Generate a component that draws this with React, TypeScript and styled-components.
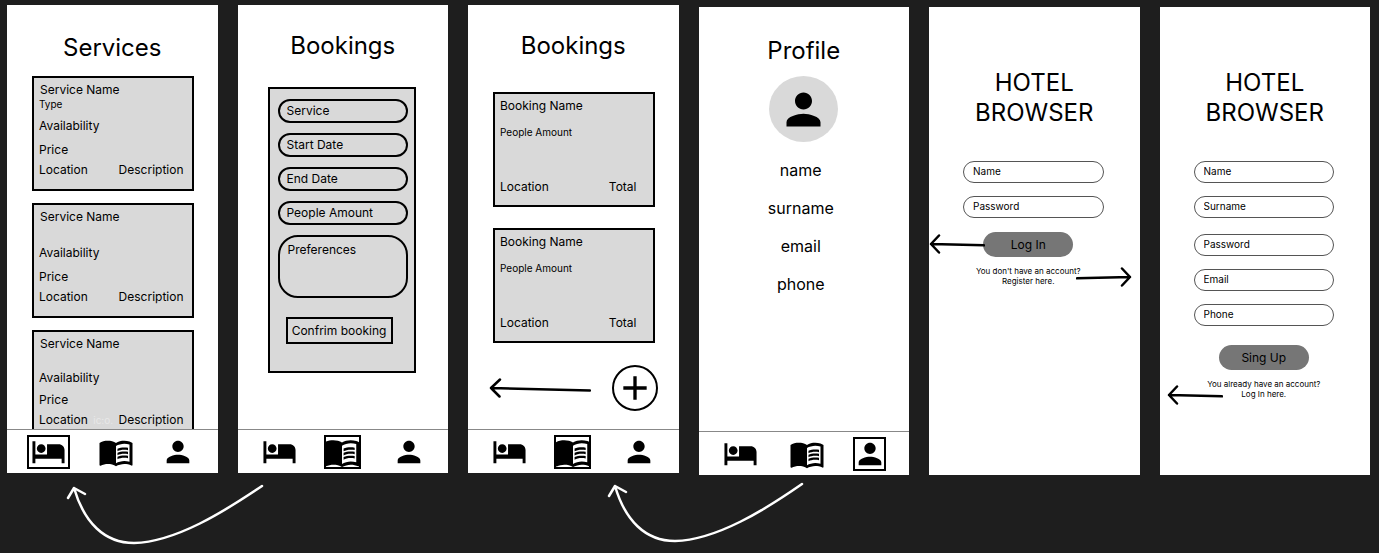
import React from 'react';
import styled, { createGlobalStyle } from 'styled-components';
import { MdHotel, MdMenuBook, MdPerson, MdAdd } from 'react-icons/md';

const GlobalStyle = createGlobalStyle`
  *, *::before, *::after { box-sizing: border-box; }
  body {
    margin: 0;
    background: #1e1e1e;
    color: #000;
    font-family: Inter, "Liberation Sans", sans-serif;
    font-size: 12px;
    line-height: 16px;
  }
  h1, h2, p, ul { margin: 0; padding: 0; font-weight: 400; }
  ul { list-style: none; }
  button, input, textarea { font: inherit; color: inherit; margin: 0; }
  a { color: inherit; text-decoration: none; }
  svg { display: block; }
`;

const Board = styled.main`
  display: grid;
  grid-template-columns: repeat(6, minmax(0, 1fr));
  grid-template-rows: auto 1fr;
  column-gap: 20px;
  align-items: start;
  min-height: 100vh;
  padding: 5px 9px 0 7px;
`;

const Screen = styled.section<{ $lowered?: boolean }>`
  position: relative;
  display: flex;
  flex-direction: column;
  min-height: 468px;
  margin-top: ${(p) => (p.$lowered ? 2 : 0)}px;
  background: #fff;
`;

const Title = styled.h1<{ $top: number }>`
  padding-top: ${(p) => p.$top}px;
  font-size: 24px;
  line-height: 30px;
  text-align: center;
`;

/* Bottom navigation */

const NavBar = styled.nav`
  display: grid;
  grid-template-columns: 43px 45px 33px;
  justify-content: space-between;
  align-items: center;
  height: 44px;
  margin-top: auto;
  padding: 0 23px 0 20px;
  border-top: 1px solid #888;
`;

const NavButton = styled.button<{ $active: boolean; $width: number }>`
  display: flex;
  align-items: center;
  justify-content: center;
  justify-self: ${(p) => (p.$active ? 'start' : 'center')};
  width: ${(p) => p.$width}px;
  height: 34px;
  padding: 0;
  background: none;
  border: ${(p) => (p.$active ? '2px solid #000' : '0')};
  overflow: hidden;
  svg { flex: none; }
`;

type Tab = 'services' | 'bookings' | 'profile';

function BottomNav({ active }: { active: Tab }) {
  return (
    <NavBar aria-label="Sections">
      <NavButton type="button" aria-label="Services" $active={active === 'services'} $width={43}>
        <MdHotel size={35} />
      </NavButton>
      <NavButton type="button" aria-label="Bookings" $active={active === 'bookings'} $width={37}>
        <MdMenuBook size={active === 'bookings' ? 38 : 36} />
      </NavButton>
      <NavButton type="button" aria-label="Profile" $active={active === 'profile'} $width={33}>
        <MdPerson size={34} />
      </NavButton>
    </NavBar>
  );
}

/* Services */

const ServiceList = styled.ul`
  display: flex;
  flex: 1 1 0;
  flex-direction: column;
  gap: 12px;
  min-height: 0;
  padding: 13px 24px 0 25px;
  overflow: hidden;
`;

const Card = styled.li`
  display: flex;
  flex: none;
  flex-direction: column;
  height: 115px;
  padding: 4px 8px 0 5px;
  background: #d9d9d9;
  border: 2px solid #000;
`;

const ServiceName = styled.h2`
  padding-left: 1px;
  font-size: 12px;
  line-height: 16px;
`;

const Kind = styled.p`
  height: 12px;
  font-size: 10px;
  line-height: 12px;
`;

const Facts = styled.div<{ $dense?: boolean }>`
  display: flex;
  flex-direction: column;
  gap: ${(p) => (p.$dense ? 6 : 8)}px;
  padding-top: ${(p) => (p.$dense ? 6 : 8)}px;
`;

const CardFooter = styled.div`
  display: flex;
  justify-content: space-between;
  margin-top: 4px;
`;

const Faint = styled.span`
  color: #e8e8e8;
  font-size: 10px;
`;

function ServiceCard({ kind, dense, note }: { kind?: string; dense?: boolean; note?: string }) {
  return (
    <Card>
      <ServiceName>Service Name</ServiceName>
      <Kind>{kind}</Kind>
      <Facts $dense={dense}>
        <p>Availability</p>
        <p>Price</p>
      </Facts>
      <CardFooter>
        <span>Location</span>
        {note && <Faint>{note}</Faint>}
        <span>Description</span>
      </CardFooter>
    </Card>
  );
}

/* Booking form */

const BookingForm = styled.form`
  display: flex;
  flex-direction: column;
  gap: 10px;
  margin: 26px 32px 0 30px;
  padding: 10px 6px 27px 8px;
  background: #d9d9d9;
  border: 2px solid #000;
`;

const BookingInput = styled.input`
  width: 100%;
  height: 24px;
  padding: 0 7px 2px;
  background: none;
  border: 2px solid #000;
  border-radius: 12px;
  outline: 0;
  &::placeholder { color: #000; opacity: 1; }
`;

const BookingNotes = styled.textarea`
  display: block;
  width: 100%;
  height: 63px;
  padding: 5px 8px;
  background: none;
  border: 2px solid #000;
  border-radius: 20px;
  outline: 0;
  resize: none;
  &::placeholder { color: #000; opacity: 1; }
`;

const ConfirmButton = styled.button`
  align-self: flex-start;
  width: 107px;
  height: 27px;
  margin: 9px 0 0 8px;
  padding: 0;
  background: none;
  border: 2px solid #000;
  white-space: nowrap;
`;

/* Bookings list */

const BookingList = styled.ul`
  display: flex;
  flex-direction: column;
  gap: 21px;
  padding: 31px 24px 0 25px;
`;

const BookingName = styled.h2`
  font-size: 12px;
  line-height: 16px;
`;

const People = styled.p`
  margin-top: 12px;
  font-size: 10px;
  line-height: 12px;
`;

const BookingFooter = styled.div`
  display: flex;
  justify-content: space-between;
  margin: auto 8px 10px 0;
`;

const AddRow = styled.div`
  display: flex;
  align-items: center;
  justify-content: space-between;
  padding: 22px 21px 0 21px;
`;

const AddButton = styled.button`
  display: flex;
  align-items: center;
  justify-content: center;
  width: 46px;
  height: 46px;
  padding: 0;
  background: none;
  border: 2px solid #000;
  border-radius: 50%;
`;

function BookingCard() {
  return (
    <Card>
      <BookingName>Booking Name</BookingName>
      <People>People Amount</People>
      <BookingFooter>
        <span>Location</span>
        <span>Total</span>
      </BookingFooter>
    </Card>
  );
}

/* Profile */

const Avatar = styled.div`
  display: flex;
  align-items: center;
  justify-content: center;
  align-self: center;
  width: 69px;
  height: 66px;
  margin-top: 10px;
  background: #d9d9d9;
  border-radius: 50%;
`;

const ProfileList = styled.ul`
  display: flex;
  flex-direction: column;
  gap: 18px;
  padding: 18px 6px 0 0;
  font-size: 16px;
  line-height: 20px;
  text-align: center;
`;

/* Account forms */

const AccountForm = styled.form`
  display: flex;
  flex-direction: column;
  padding: 33px 36px 0 34px;
`;

const FieldGroup = styled.div`
  display: flex;
  flex-direction: column;
  gap: 13px;
  & + & { margin-top: 16px; }
`;

const AccountInput = styled.input`
  width: 100%;
  height: 22px;
  padding: 0 9px 2px;
  background: none;
  border: 1px solid #555;
  border-radius: 11px;
  outline: 0;
  font-size: 10px;
  &::placeholder { color: #000; opacity: 1; }
`;

const Actions = styled.div<{ $top: number; $right?: number }>`
  display: flex;
  flex-direction: column;
  align-items: center;
  gap: 9px;
  padding: ${(p) => p.$top}px ${(p) => p.$right ?? 0}px 0 0;
`;

const SubmitButton = styled.button`
  width: 90px;
  height: 25px;
  padding: 0;
  background: #767676;
  border: 0;
  border-radius: 13px;
`;

const Hint = styled.p`
  font-size: 8px;
  line-height: 10px;
  text-align: center;
  white-space: nowrap;
`;

/* Prototype flow arrows */

const Pointer = styled.svg<{ $x: number; $y: number }>`
  position: absolute;
  left: ${(p) => p.$x}px;
  top: ${(p) => p.$y}px;
`;

const FlowCurve = styled.svg<{ $column: string }>`
  grid-column: ${(p) => p.$column};
  grid-row: 2;
  width: 100%;
  height: auto;
`;

function Line({ d, color = '#000' }: { d: string; color?: string }) {
  return <path d={d} fill="none" stroke={color} strokeWidth="2.5" strokeLinecap="round" strokeLinejoin="round" />;
}

export default function App() {
  return (
    <>
      <GlobalStyle />
      <Board>
        <Screen>
          <Title $top={28}>Services</Title>
          <ServiceList>
            <ServiceCard kind="Type" />
            <ServiceCard />
            <ServiceCard dense note="ic:o." />
          </ServiceList>
          <BottomNav active="services" />
        </Screen>

        <Screen>
          <Title $top={26}>Bookings</Title>
          <BookingForm>
            <BookingInput placeholder="Service" aria-label="Service" />
            <BookingInput placeholder="Start Date" aria-label="Start Date" />
            <BookingInput placeholder="End Date" aria-label="End Date" />
            <BookingInput placeholder="People Amount" aria-label="People Amount" />
            <BookingNotes placeholder="Preferences" aria-label="Preferences" />
            <ConfirmButton type="button">Confrim booking</ConfirmButton>
          </BookingForm>
          <BottomNav active="bookings" />
        </Screen>

        <Screen>
          <Title $top={26}>Bookings</Title>
          <BookingList>
            <BookingCard />
            <BookingCard />
          </BookingList>
          <AddRow>
            <svg width="102" height="20" viewBox="0 0 102 20" aria-hidden="true">
              <Line d="M101 12.5 L2 10 M11 1.5 L2 10 L10.5 18.5" />
            </svg>
            <AddButton type="button" aria-label="Add booking">
              <MdAdd size={40} />
            </AddButton>
          </AddRow>
          <BottomNav active="bookings" />
        </Screen>

        <Screen $lowered>
          <Title $top={29}>Profile</Title>
          <Avatar>
            <MdPerson size={51} />
          </Avatar>
          <ProfileList>
            <li>name</li>
            <li>surname</li>
            <li>email</li>
            <li>phone</li>
          </ProfileList>
          <BottomNav active="profile" />
        </Screen>

        <Screen $lowered>
          <Title $top={61}>HOTEL<br />BROWSER</Title>
          <AccountForm>
            <FieldGroup>
              <AccountInput placeholder="Name" aria-label="Name" />
              <AccountInput placeholder="Password" aria-label="Password" />
            </FieldGroup>
            <Actions $top={14} $right={10}>
              <SubmitButton type="button">Log In</SubmitButton>
              <Hint>You don't have an account?<br /><a href="#register">Register here.</a></Hint>
            </Actions>
          </AccountForm>
          <Pointer $x={0} $y={227} width="56" height="20" viewBox="0 0 56 20" aria-hidden="true">
            <Line d="M55 11.3 L2 10 M10 1.5 L2 10 L10 18.5" />
          </Pointer>
          <Pointer $x={147} $y={260} width="56" height="20" viewBox="0 0 56 20" aria-hidden="true">
            <Line d="M1 11.3 L54 10 M46 1.5 L54 10 L46 18.5" />
          </Pointer>
        </Screen>

        <Screen $lowered>
          <Title $top={61}>HOTEL<br />BROWSER</Title>
          <AccountForm>
            <FieldGroup>
              <AccountInput placeholder="Name" aria-label="Name" />
              <AccountInput placeholder="Surname" aria-label="Surname" />
            </FieldGroup>
            <FieldGroup>
              <AccountInput placeholder="Password" aria-label="Password" />
              <AccountInput placeholder="Email" aria-label="Email" />
              <AccountInput placeholder="Phone" aria-label="Phone" />
            </FieldGroup>
            <Actions $top={19}>
              <SubmitButton type="button">Sing Up</SubmitButton>
              <Hint>You already have an account?<br /><a href="#login">Log In here.</a></Hint>
            </Actions>
          </AccountForm>
          <Pointer $x={7} $y={378} width="56" height="20" viewBox="0 0 56 20" aria-hidden="true">
            <Line d="M55 11.3 L2 10 M10 1.5 L2 10 L10 18.5" />
          </Pointer>
        </Screen>

        <FlowCurve $column="1 / 3" viewBox="0 0 441 72" aria-hidden="true">
          <Line color="#fff" d="M255 11 C218 36 169 67 127 68 C97 68 77 47 67 13 M61 23 L67 13 L78 19" />
        </FlowCurve>
        <FlowCurve $column="3 / 5" viewBox="0 0 441 72" aria-hidden="true">
          <Line color="#fff" d="M334 9 C298 34 249 65 207 66 C177 66 157 45 147 11 M141 21 L147 11 L158 17" />
        </FlowCurve>
      </Board>
    </>
  );
}
